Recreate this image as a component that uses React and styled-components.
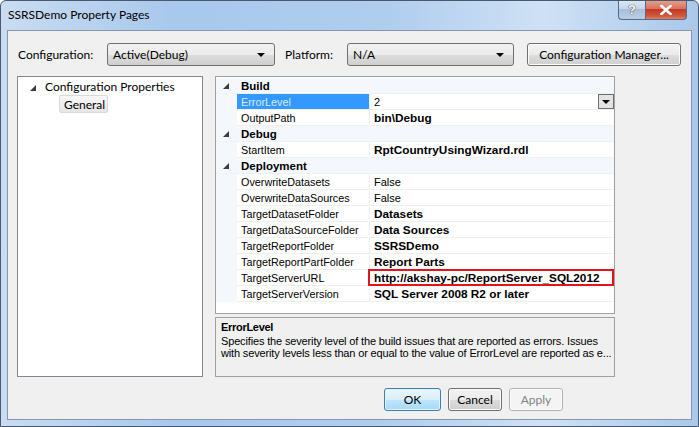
import React from "react";
import styled, { createGlobalStyle } from "styled-components";

const GlobalStyle = createGlobalStyle`
  html, body { margin: 0; padding: 0; background: #fff; }
  body { font-family: "Segoe UI", Lato, "Noto Sans", sans-serif; }
  * { box-sizing: border-box; }
`;

const sections = [
  {
    name: "Build",
    rows: [
      { name: "ErrorLevel", value: "2", selected: true, dropdown: true },
      { name: "OutputPath", value: "bin\\Debug", bold: true },
    ],
  },
  {
    name: "Debug",
    rows: [{ name: "StartItem", value: "RptCountryUsingWizard.rdl", bold: true }],
  },
  {
    name: "Deployment",
    rows: [
      { name: "OverwriteDatasets", value: "False" },
      { name: "OverwriteDataSources", value: "False" },
      { name: "TargetDatasetFolder", value: "Datasets", bold: true },
      { name: "TargetDataSourceFolder", value: "Data Sources", bold: true },
      { name: "TargetReportFolder", value: "SSRSDemo", bold: true },
      { name: "TargetReportPartFolder", value: "Report Parts", bold: true },
      { name: "TargetServerURL", value: "http://akshay-pc/ReportServer_SQL2012", bold: true, marked: true },
      { name: "TargetServerVersion", value: "SQL Server 2008 R2 or later", bold: true },
    ],
  },
];

const Expander = () => (
  <svg width="6" height="6" viewBox="0 0 6 6">
    <polygon points="6,0 6,6 0,6" fill="#3c3c3c" />
  </svg>
);

const ComboArrow = () => (
  <svg width="8" height="4" viewBox="0 0 8 4">
    <polygon points="0,0 8,0 4,4" fill="#000" />
  </svg>
);

export default function App() {
  return (
    <>
      <GlobalStyle />
      <Window>
        <TitleBar>
          <Title>SSRSDemo Property Pages</Title>
          <Caption>
            <HelpBtn>?</HelpBtn>
            <CloseBtn>
              <svg width="12" height="10" viewBox="0 0 12 10">
                <path d="M1.5 1 L10.5 9 M10.5 1 L1.5 9" stroke="#fff" strokeWidth="2.6" strokeLinecap="square" />
              </svg>
            </CloseBtn>
          </Caption>
        </TitleBar>
        <Client>
          <ConfigRow>
            <Label>Configuration:</Label>
            <Combo $width={168}>
              <span>Active(Debug)</span>
              <ComboArrow />
            </Combo>
            <Label $ml={10}>Platform:</Label>
            <Combo $width={167}>
              <span>N/A</span>
              <ComboArrow />
            </Combo>
            <Button $width={154} $ml={13}>Configuration Manager...</Button>
          </ConfigRow>
          <Body>
            <Tree>
              <TreeItem>
                <Expander />
                <span>Configuration Properties</span>
              </TreeItem>
              <TreeChild>General</TreeChild>
            </Tree>
            <RightColumn>
              <Grid>
                {sections.map((s) => (
                  <React.Fragment key={s.name}>
                    <CategoryRow>
                      <Gutter><Expander /></Gutter>
                      <CategoryName>{s.name}</CategoryName>
                    </CategoryRow>
                    {s.rows.map((r) => (
                      <PropRow key={r.name}>
                        <Gutter />
                        <PropName $selected={r.selected}>{r.name}</PropName>
                        <PropValue $bold={r.bold}>
                          <span>{r.value}</span>
                          {r.dropdown && (
                            <DropBtn>
                              <ComboArrow />
                            </DropBtn>
                          )}
                          {r.marked && <Marker />}
                        </PropValue>
                      </PropRow>
                    ))}
                  </React.Fragment>
                ))}
              </Grid>
              <Description>
                <DescTitle>ErrorLevel</DescTitle>
                <DescLine>
                  Specifies the severity level of the build issues that are reported as errors. Issues
                </DescLine>
                <DescLine>
                  with severity levels less than or equal to the value of ErrorLevel are reported as e...
                </DescLine>
              </Description>
            </RightColumn>
          </Body>
          <ButtonRow>
            <Button $width={57} $default>OK</Button>
            <Button $width={54}>Cancel</Button>
            <Button $width={54} $disabled>Apply</Button>
          </ButtonRow>
        </Client>
      </Window>
    </>
  );
}

const Window = styled.div`
  width: 699px;
  height: 427px;
  display: flex;
  flex-direction: column;
  border: 1px solid #4a5a6e;
  border-radius: 6px 6px 0 0;
  background: linear-gradient(90deg, #c9dcf2 0%, #a8c8ec 25%, #b0cdee 55%, #cfe1f5 78%, #a9c8ea 100%);
  overflow: hidden;
`;

const TitleBar = styled.div`
  height: 29px;
  flex: none;
  display: flex;
  align-items: flex-start;
  justify-content: space-between;
  padding-left: 7px;
`;

const Title = styled.div`
  font-size: 12px;
  color: #000;
  margin-top: 6px;
`;

const Caption = styled.div`
  display: flex;
  margin-right: 11px;
  margin-top: -1px;
`;

const CaptionBtn = styled.div`
  height: 20px;
  display: flex;
  align-items: center;
  justify-content: center;
  border: 1px solid #5a6b80;
  border-top: none;
`;

const HelpBtn = styled(CaptionBtn)`
  width: 27px;
  border-right: none;
  border-radius: 0 0 0 4px;
  background: linear-gradient(180deg, #dfe9f5 0%, #c5d6ea 45%, #a9bfd9 50%, #b9cee6 100%);
  color: #fff;
  font-family: "Liberation Sans", sans-serif;
  font-weight: bold;
  font-size: 13px;
  text-shadow: 0 0 1px #333, 0 0 1px #333;
`;

const CloseBtn = styled(CaptionBtn)`
  width: 42px;
  border-radius: 0 0 4px 0;
  background: linear-gradient(180deg, #e8a493 0%, #d8735f 45%, #c23a22 50%, #cf5a3e 85%, #e0836a 100%);
`;

const Client = styled.div`
  flex: 1;
  margin: 0 6px 6px 6px;
  background: #f0f0f0;
  border: 1px solid #8796ab;
  display: flex;
  flex-direction: column;
  padding: 12px 0 0 9px;
`;

const ConfigRow = styled.div`
  height: 23px;
  display: flex;
  align-items: center;
`;

const Label = styled.span`
  font-size: 12px;
  color: #000;
  margin-left: ${(p) => p.$ml || 1}px;
  width: ${(p) => (p.$ml ? 62 : 89)}px;
`;

const Combo = styled.div`
  width: ${(p) => p.$width}px;
  height: 23px;
  display: flex;
  align-items: center;
  justify-content: space-between;
  padding: 0 9px 0 5px;
  border: 1px solid #707070;
  border-radius: 3px;
  background: linear-gradient(180deg, #f2f2f2 0%, #ebebeb 50%, #dddddd 51%, #cfcfcf 100%);
  font-size: 12px;
  color: #000;
`;

const Button = styled.div`
  width: ${(p) => p.$width}px;
  height: 23px;
  margin-left: ${(p) => p.$ml || 0}px;
  display: flex;
  align-items: center;
  justify-content: center;
  font-size: 12px;
  border-radius: 3px;
  border: 1px solid ${(p) => (p.$default ? "#3c7fb1" : p.$disabled ? "#adb2b5" : "#707070")};
  color: ${(p) => (p.$disabled ? "#838383" : "#000")};
  background: ${(p) =>
    p.$default
      ? "linear-gradient(180deg, #eaf6fd 0%, #d9f0fc 50%, #bee6fd 51%, #a7d9f5 100%)"
      : p.$disabled
      ? "#f4f4f4"
      : "linear-gradient(180deg, #f2f2f2 0%, #ebebeb 50%, #dddddd 51%, #cfcfcf 100%)"};
  box-shadow: ${(p) => (p.$default ? "inset 0 0 0 1px #e0f2fc" : "inset 0 0 0 1px #fcfcfc")};
`;

const Body = styled.div`
  display: flex;
  gap: 12px;
  margin-top: 10px;
`;

const Tree = styled.div`
  width: 186px;
  height: 301px;
  background: #fff;
  border: 1px solid #828790;
  padding: 1px 0 0 12px;
`;

const TreeItem = styled.div`
  height: 17px;
  display: flex;
  align-items: center;
  gap: 9px;
  font-size: 12px;
  color: #000;
  svg { margin-top: 2px; }
`;

const TreeChild = styled.div`
  margin-left: 29px;
  width: 49px;
  height: 18px;
  display: flex;
  align-items: center;
  padding-left: 4px;
  font-size: 12px;
  color: #000;
  border: 1px solid #d9d9d9;
  border-radius: 2px;
  background: linear-gradient(180deg, #f8f8f8, #e5e5e5);
`;

const RightColumn = styled.div`
  width: 400px;
  display: flex;
  flex-direction: column;
  gap: 3px;
`;

const Grid = styled.div`
  height: 238px;
  background: #fff;
  border: 1px solid #a0a0a0;
  padding-top: 1px;
  font-family: "Liberation Sans", Arial, sans-serif;
  font-size: 11px;
  color: #000;
`;

const CategoryRow = styled.div`
  height: 16px;
  display: grid;
  grid-template-columns: 21px 1fr;
  background: #f4f7fc;
  border-bottom: 1px solid #eef2f8;
`;

const Gutter = styled.div`
  background: #f4f7fc;
  display: flex;
  align-items: center;
  justify-content: center;
  padding-right: 2px;
`;

const CategoryName = styled.div`
  font-weight: bold;
  font-size: 11.5px;
  padding-left: 4px;
  display: flex;
  align-items: center;
`;

const PropRow = styled.div`
  height: 16px;
  display: grid;
  grid-template-columns: 21px 133px 1fr;
`;

const PropName = styled.div`
  display: flex;
  align-items: center;
  padding-left: 4px;
  border-right: 1px solid #f0f0f0;
  border-bottom: 1px solid #f0f0f0;
  background: ${(p) => (p.$selected ? "#3399ff" : "#fff")};
  color: ${(p) => (p.$selected ? "#dbe9fb" : "#000")};
  font-size: 10.8px;
  white-space: nowrap;
`;

const PropValue = styled.div`
  position: relative;
  display: flex;
  align-items: center;
  padding-left: 4px;
  border-bottom: 1px solid #f0f0f0;
  font-weight: ${(p) => (p.$bold ? "bold" : "normal")};
  font-size: ${(p) => (p.$bold ? "11.8px" : "11px")};
  white-space: nowrap;
`;

const DropBtn = styled.div`
  margin-left: auto;
  width: 16px;
  height: 15px;
  border: 1px solid #6f6f6f;
  background: #e3e3e3;
  display: flex;
  align-items: center;
  justify-content: center;
`;

const Marker = styled.div`
  position: absolute;
  left: -2px;
  right: 0;
  top: -1px;
  bottom: -1px;
  border: 2px solid #e3131c;
`;

const Description = styled.div`
  height: 60px;
  border: 1px solid #a0a0a0;
  background: #f0f0f0;
  padding: 3px 5px;
  font-family: "Liberation Sans", Arial, sans-serif;
  font-size: 11px;
  color: #000;
  overflow: hidden;
`;

const DescTitle = styled.div`
  font-weight: bold;
  letter-spacing: -0.3px;
  height: 14px;
`;

const DescLine = styled.div`
  line-height: 12px;
  white-space: nowrap;
  letter-spacing: -0.15px;
`;

const ButtonRow = styled.div`
  display: flex;
  gap: 7px;
  margin-top: 11px;
  padding-left: 367px;
`;
